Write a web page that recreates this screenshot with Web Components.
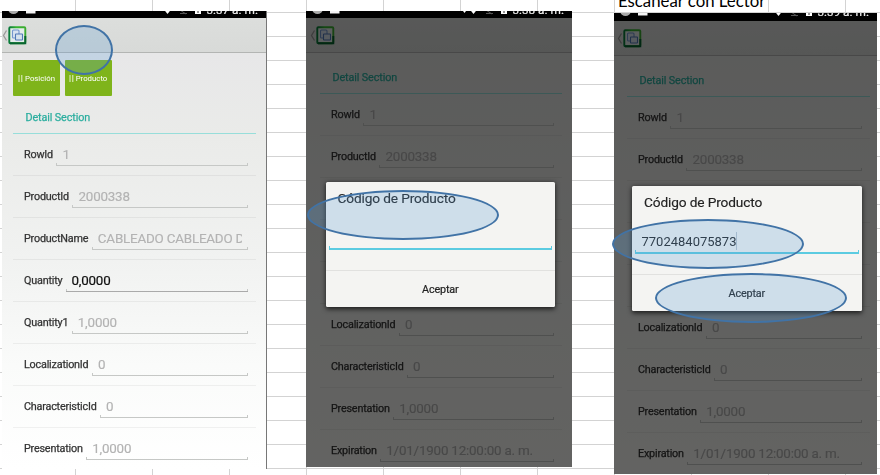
<!DOCTYPE html>
<html lang="es"><head><meta charset="utf-8"><title>Escanear con Lector</title>
<style>html,body{margin:0;width:880px;height:475px;overflow:hidden;background:#fff}</style></head>
<body><demo-sheet></demo-sheet>
<script>
const define=(name,html,setup)=>customElements.define(name,class extends HTMLElement{
  connectedCallback(){
    if(this.shadowRoot)return;
    this.attachShadow({mode:'open'}).innerHTML=typeof html==='function'?html(this):html;
    if(setup)setup(this);
  }
});

/* Label, read-only value and bracketed underline */
define('field-row',e=>`<style>
:host{display:flex;height:42px;box-sizing:border-box;padding:0 8.5px 0 11px;border-bottom:1px solid #0000000d;color:#333}
.l{font-size:10.8px;letter-spacing:-.2px;line-height:42px;white-space:nowrap;margin-right:3.5px;-webkit-text-stroke:.25px currentColor}
.v{flex:1;min-width:0;height:23px;margin-top:9px;box-sizing:border-box;border-bottom:1px solid var(--u,#c6c8c6);padding:0 5.5px 0 6px;font-size:13.4px;letter-spacing:-.2px;line-height:24px;color:#b3b3b3;-webkit-text-stroke:.15px currentColor;overflow:hidden;white-space:nowrap;
background:linear-gradient(#c6c8c6,#c6c8c6) left bottom/1px 2px no-repeat,linear-gradient(#c6c8c6,#c6c8c6) right bottom/1px 2px no-repeat}
.v span{display:block;overflow:hidden}
:host([active]) .v{color:#111;border-color:#aaa;padding-left:5.5px;-webkit-text-stroke:.2px #111}
</style>${e.getAttribute('label')?`<span class="l">${e.getAttribute('label')}</span><div class="v"><span><slot></slot></span></div>`:''}`);

define('status-bar',e=>`<style>
:host{display:flex;justify-content:space-between;height:var(--bar,7px);background:#000;overflow:hidden;padding:0 8px 0 6px;color:#eee;flex:none}
svg{display:block;height:4px;overflow:hidden}
.r{display:flex;gap:3.5px}.t{font-size:11.8px;line-height:12px;margin-top:-7px;height:12px;white-space:nowrap;-webkit-text-stroke:.2px currentColor}
</style><svg width="30" height="4"><ellipse cx="5.5" cy="-1" rx="5" ry="4" fill="#aaa"/><rect x="18" y="-5" width="9.5" height="7.5" fill="#f4f4f4"/></svg>
<div class="r"><svg width="54" height="4">${e.hasAttribute('sync')?'<path d="M8 0h3L9.500 2z" fill="#fff"/>':''}<path d="M14.500-2h8l-4 5z" fill="#fff"/><path d="M31-1l6 4M31 2.500h7" fill="none" stroke="#555"/><rect x="46" y="-4" width="6" height="7" fill="#fff"/><path d="M49-1v3" stroke="#333"/></svg><span class="t"><slot></slot></span></div>`);

define('app-header',`<style>
:host{display:flex;align-items:center;height:35px;box-sizing:border-box;background:linear-gradient(#dcdedc,#d8dad8);border-bottom:1px solid #b3b5b3;flex:none;padding-left:var(--lead,0)}
svg{display:block}
</style><svg width="28" height="22" viewBox="0 0 28 22"><defs><linearGradient id="g" x1="0" y1="0" x2="1" y2="0"><stop offset="0" stop-color="#087b3a"/><stop offset=".45" stop-color="#35b32f"/><stop offset="1" stop-color="#3dab32"/></linearGradient></defs>
<path d="M4.500 6.500 1.500 11.500l3 5" fill="none" stroke="#999" stroke-width="1.300"/>
<rect x="7.300" y="3.300" width="16" height="16" rx="1" fill="#e4eceb" stroke="url(#g)" stroke-width="1.900"/>
<path d="M23.300 12v7.300H8" fill="none" stroke="#076331" stroke-width="1.900"/>
<rect x="10.500" y="6" width="6.500" height="8" rx="1" fill="#d8e3f1" stroke="#7396cd" stroke-width="1.100"/>
<rect x="13.500" y="10" width="7" height="6" rx=".5" fill="#d6e3ed" stroke="#5079b7" stroke-width="1.100"/></svg>`);

define('green-button',`<style>
:host{display:flex;align-items:center;justify-content:center;gap:2px;width:47px;height:35.5px;border-radius:1px;background:#7fb41b;color:#fff;font-size:7.8px;padding-top:1px;box-sizing:border-box}
</style><svg width="5" height="7"><path d="M1 0v7M3.800 0v7" stroke="#e5f0cf" stroke-width="1"/></svg><span><slot></slot></span>`);

define('section-title',`<style>
:host{display:block;height:27px;line-height:22px;box-sizing:border-box;padding-left:12.5px;border-bottom:1.5px solid #97deda;color:#2bae9f;font-size:10.8px;letter-spacing:-.12px;-webkit-text-stroke:.25px currentColor}
</style><slot></slot>`);

/* Phone screen: bar, header, scrolling body and an optional scrim */
define('phone-screen',`<style>
:host{display:flex;flex-direction:column;position:absolute;overflow:hidden;font-family:Roboto,"Liberation Sans",sans-serif;background:#eee}
.c{flex:1;min-height:0;overflow:hidden;padding:var(--top,7px) 10px 0 11px;background:linear-gradient(#e7e7e8,#eaebe9 20%,#f1f2f1 50%,#fafbfa 75%,#fff)}
:host([edge]){border-right:1.5px solid #777}
::slotted(.buttons){display:flex;gap:4.5px;height:47px}
.s{position:absolute;inset:var(--bar,7px) 0 0;background:#0009;display:none}
:host([dim]) .s{display:block}:host([dim]) .c{background:linear-gradient(#e4e5e3,#f3f4f1 70%,#f8f8f4)}
.p{filter:blur(.3px);display:flex;flex-direction:column;height:100%}
</style><div class="p"><slot name="top"></slot><div class="c"><slot></slot></div></div><div class="s"></div>`);

define('product-dialog',`<style>
:host{display:flex;flex-direction:column;position:absolute;width:229.5px;height:125px;box-sizing:border-box;padding:0 3px;background:#f4f4f2;border-radius:1.5px;box-shadow:0 1.5px 5px #000b;font-family:Roboto,"Liberation Sans",sans-serif;color:#222;filter:blur(.25px)}
.h{font-size:13.7px;letter-spacing:-.13px;line-height:32px;padding-left:9px;height:41px;-webkit-text-stroke:.15px currentColor}
.i{height:27px;box-sizing:border-box;border-bottom:2px solid #5bcbe1;padding-left:6.5px;font-size:13px;line-height:29px;display:flex;background:linear-gradient(#5bcbe1,#5bcbe1) left bottom/1px 2px no-repeat,linear-gradient(#5bcbe1,#5bcbe1) right bottom/1px 2px no-repeat}
.i i{width:1px;height:18px;margin-top:5px;background:#bbc5cc;display:none}:host([caret]) i{display:block}
.a{margin:20px -3px 0;border-top:1px solid #e1e1df;height:36px;line-height:38px;text-align:center;font-size:10.8px;letter-spacing:-.15px;-webkit-text-stroke:.2px currentColor}
</style><div class="h">Código de Producto</div><div class="i"><slot></slot><i></i></div><div class="a">Aceptar</div>`);

/* Translucent oval callout */
define('oval-mark',`<style>:host{position:absolute;box-sizing:border-box;border:1.5px solid #4173a6;border-width:2px;border-radius:50%;background:#5b9bd540}</style>`);

define('demo-sheet',()=>{
const later=`<field-row></field-row><field-row></field-row><field-row></field-row><field-row label="LocalizationId">0</field-row><field-row label="CharacteristicId">0</field-row><field-row label="Presentation">1,0000</field-row><field-row label="Expiration">1/01/1900 12:00:00 a. m.</field-row>`;
const first=`<section-title>Detail Section</section-title><field-row label="RowId">1</field-row><field-row label="ProductId">2000338</field-row>`;
return `<style>
:host{display:block;position:relative;width:880px;height:475px;overflow:hidden;
background:repeating-linear-gradient(90deg,transparent 0 75px,#d3d3d3 75px 76px,transparent 76px 77px),repeating-linear-gradient(transparent 0 12px,#d3d3d3 12px 13px,transparent 13px 24px),#fff}
.note{position:absolute;left:615px;top:-9px;width:153px;height:21px;background:#fff;box-sizing:border-box;padding-left:3px;font:16.8px/20px Lato,"Open Sans",sans-serif;color:#000;white-space:nowrap}
#p1{left:2px;top:11px;width:265px;height:458px;box-sizing:border-box}
#p2{left:306px;top:11px;width:266px;height:456px;--top:14.3px;--lead:3.5px}
#p3{left:614px;top:13px;width:263px;height:461px;--top:14.3px;--bar:8px;--lead:2.5px}
.b2{display:block;padding-left:3px}.b3{display:block;margin-right:-3px}.b3{margin-left:2px}
</style>
<div class="note">Escanear con Lector</div>
<phone-screen id="p1" edge><status-bar slot="top">3:37 a. m.</status-bar><app-header slot="top"></app-header>
<div class="buttons"><green-button>Posición</green-button><green-button>Producto</green-button></div>
<section-title>Detail Section</section-title>
<field-row label="RowId">1</field-row><field-row label="ProductId">2000338</field-row><field-row label="ProductName">CABLEADO CABLEADO DE</field-row><field-row label="Quantity" active>0,0000</field-row><field-row label="Quantity1">1,0000</field-row><field-row label="LocalizationId">0</field-row><field-row label="CharacteristicId">0</field-row><field-row label="Presentation">1,0000</field-row></phone-screen>
<phone-screen id="p2" dim><status-bar slot="top" sync>3:38 a. m.</status-bar><app-header slot="top"></app-header><div class="b2">${first+later}</div></phone-screen>
<phone-screen id="p3" dim><status-bar slot="top">3:39 a. m.</status-bar><app-header slot="top"></app-header><div class="b3">${first+later}</div></phone-screen>
<product-dialog style="left:325.5px;top:182px"></product-dialog>
<product-dialog caret style="left:632px;top:185.5px">7702484075873</product-dialog>
<oval-mark style="left:55px;top:25px;width:58px;height:50px"></oval-mark>
<oval-mark style="left:307px;top:190px;width:192px;height:50px"></oval-mark>
<oval-mark style="left:612px;top:219px;width:192px;height:50px"></oval-mark>
<oval-mark style="left:655px;top:273px;width:192px;height:50px"></oval-mark>`});
</script></body></html>
